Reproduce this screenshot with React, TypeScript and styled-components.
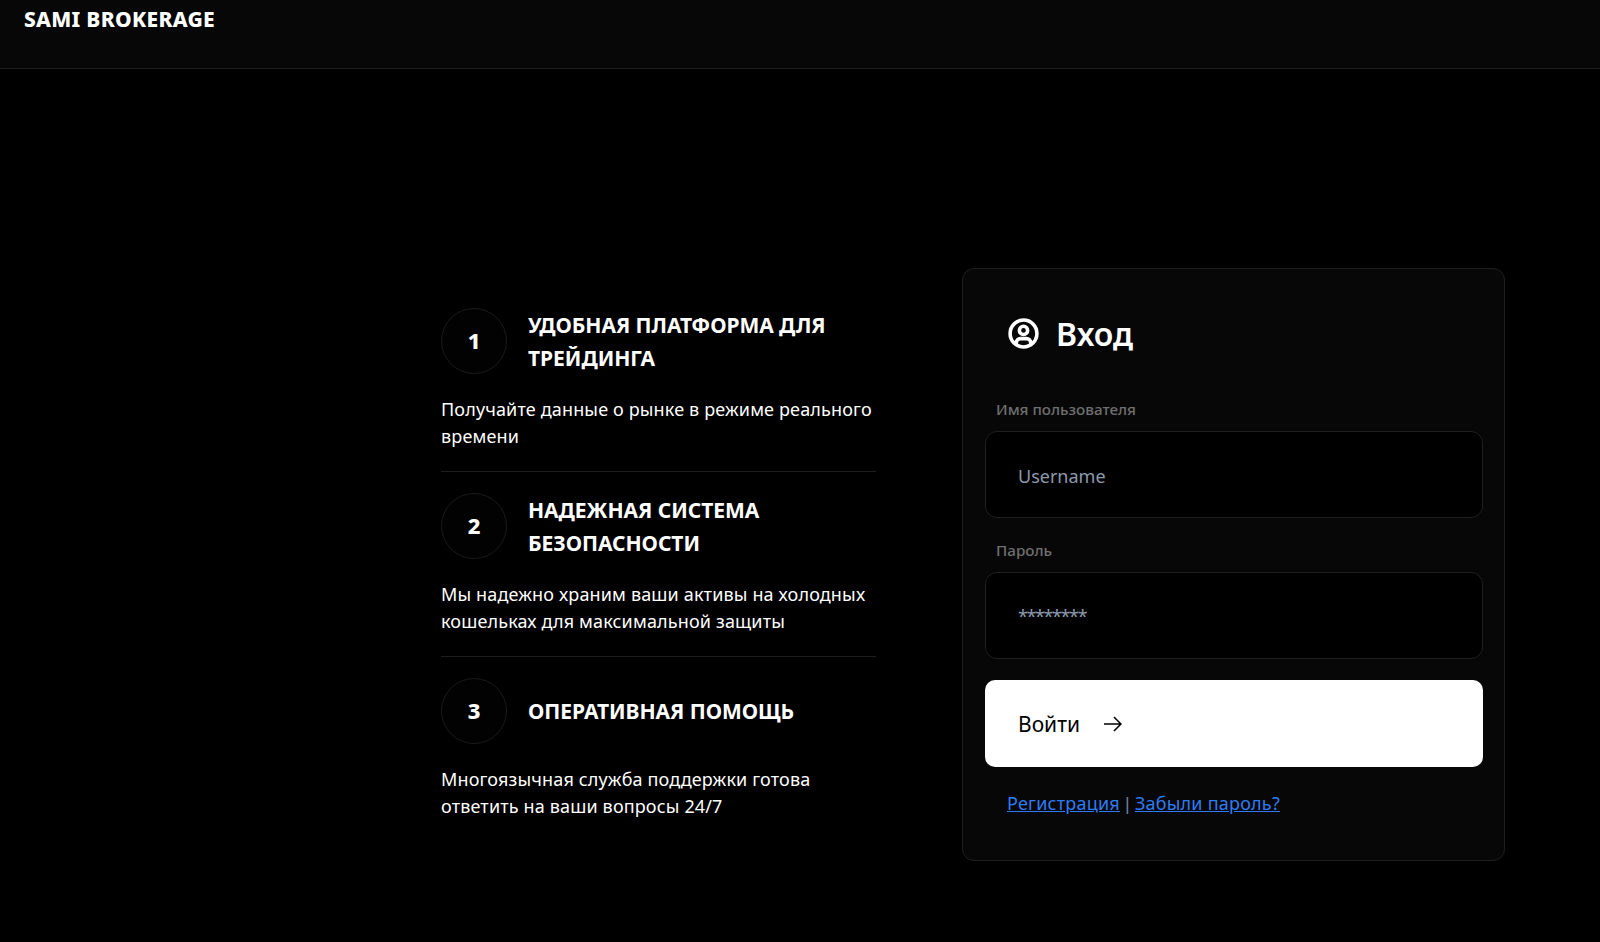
import React from "react";
import styled, { createGlobalStyle } from "styled-components";

const Global = createGlobalStyle`
  html, body { margin: 0; padding: 0; background: #000; }
  body { font-family: "Noto Sans", "Roboto", "Liberation Sans", sans-serif; color: #fff; }
  * { box-sizing: border-box; }
`;
const Page = styled.div`
  width: 100%;
  min-height: 942px;
  background: #000;
  overflow: hidden;
`;
const Header = styled.header`
  height: 69px;
  background: #070707;
  border-bottom: 1px solid #1f1f1f;
  padding: 6px 0 0 24px;
`;
const Brand = styled.div`
  font-size: 21px;
  line-height: 26px;
  font-weight: 800;
  letter-spacing: 0.3px;
`;
const Main = styled.main`
  display: flex;
  align-items: flex-start;
  padding: 199px 0 0 441px;
  gap: 86px;
`;
const Features = styled.section`
  width: 435px;
  padding-top: 40px;
`;
const Feature = styled.article<{ $last?: boolean }>`
  padding-bottom: 21px;
  margin-bottom: 21px;
  border-bottom: ${(p) => (p.$last ? "none" : "1px solid #1f1f1f")};
`;
const FeatureHead = styled.div`
  display: flex;
  align-items: center;
  gap: 21px;
  height: 66px;
  margin-bottom: 22px;
`;
const Circle = styled.div`
  width: 66px;
  height: 66px;
  flex: none;
  border: 1px solid #1a1a1a;
  border-radius: 50%;
  background: #020202;
  display: flex;
  align-items: center;
  justify-content: center;
  padding-bottom: 3px;
  font-size: 22px;
  font-weight: 800;
`;
const FeatureTitle = styled.h3`
  margin: 0;
  padding-top: 1px;
  font-size: 21px;
  line-height: 32.5px;
  font-weight: 700;
  letter-spacing: -0.05px;
`;
const FeatureText = styled.p`
  margin: 0;
  font-size: 18px;
  line-height: 27px;
  font-weight: 400;
  letter-spacing: 0.15px;
`;
const Card = styled.section`
  width: 543px;
  height: 593px;
  background: #070707;
  border: 1px solid #1f1f1f;
  border-radius: 12px;
  padding: 0 21.5px 0 22px;
`;
const CardTitle = styled.div`
  display: flex;
  align-items: center;
  height: 66px;
  margin-top: 31px;
  margin-bottom: 33px;
  padding-left: 22px;
  gap: 16px;
  font-size: 32px;
  font-weight: 600;
`;
const Label = styled.label`
  display: block;
  margin-left: 11px;
  font-size: 15.2px;
  line-height: 20px;
  font-weight: 500;
  color: #6f6f6f;
  margin-bottom: 12px;
`;
const InputBox = styled.div<{ $gap: number; $mask?: boolean }>`
  height: 87px;
  background: #000;
  border: 1px solid #1f1f1f;
  border-radius: 12px;
  display: flex;
  align-items: center;
  padding: ${(p) => (p.$mask ? "1px" : "3px")} 0 0 32px;
  font-size: 18px;
  color: #8b9aad;
  letter-spacing: ${(p) => (p.$mask ? "-1.4px" : "0")};
  margin-bottom: ${(p) => p.$gap}px;
`;
const SubmitButton = styled.button`
  width: 100%;
  height: 87px;
  border: none;
  border-radius: 10px;
  background: #fff;
  color: #000;
  display: flex;
  align-items: center;
  gap: 21px;
  padding: 0 0 0 33px;
  font-family: inherit;
  font-size: 21px;
  font-weight: 400;
`;
const Links = styled.div`
  margin: 24px 0 0 22px;
  font-size: 18px;
  line-height: 24px;
  letter-spacing: 0.22px;
  color: #6f7f96;
`;
const Link = styled.a`
  color: #2f7bf5;
  text-decoration: underline;
`;
const Separator = styled.span`
  display: inline-block;
  width: 15px;
  text-align: center;
  letter-spacing: 0;
  font-family: "Liberation Sans", sans-serif;
`;

const features = [
  { n: 1, title: "УДОБНАЯ ПЛАТФОРМА ДЛЯ ТРЕЙДИНГА", text: "Получайте данные о рынке в режиме реального времени" },
  { n: 2, title: "НАДЕЖНАЯ СИСТЕМА БЕЗОПАСНОСТИ", text: "Мы надежно храним ваши активы на холодных кошельках для максимальной защиты" },
  { n: 3, title: "ОПЕРАТИВНАЯ ПОМОЩЬ", text: "Многоязычная служба поддержки готова ответить на ваши вопросы 24/7" },
];

const UserAvatar = () => (
  <svg width="33" height="33" viewBox="0 0 32 32" fill="currentColor" stroke="currentColor" strokeWidth="1.5" aria-hidden>
    <path d="M16,8a5,5,0,1,0,5,5A5,5,0,0,0,16,8Zm0,8a3,3,0,1,1,3-3A3.0034,3.0034,0,0,1,16,16Z" />
    <path d="M16,2A14,14,0,1,0,30,16,14.0158,14.0158,0,0,0,16,2ZM10,26.3765V25a3.0033,3.0033,0,0,1,3-3h6a3.0033,3.0033,0,0,1,3,3v1.3765a11.8989,11.8989,0,0,1-12,0Zm13.9925-1.4507A5.0016,5.0016,0,0,0,19,20H13a5.0016,5.0016,0,0,0-4.9925,4.9258,12,12,0,1,1,15.985,0Z" />
  </svg>
);
const ArrowRight = () => (
  <svg width="24" height="24" viewBox="0 0 32 32" fill="currentColor" aria-hidden>
    <path d="M18 6L16.57 7.393 24.15 15 4 15 4 17 24.15 17 16.57 24.573 18 26 28 16 18 6z" />
  </svg>
);

export default function App() {
  return (
    <Page>
      <Global />
      <Header>
        <Brand>SAMI BROKERAGE</Brand>
      </Header>
      <Main>
        <Features>
          {features.map((f, i) => (
            <Feature key={f.n} $last={i === features.length - 1}>
              <FeatureHead>
                <Circle>{f.n}</Circle>
                <FeatureTitle>{f.title}</FeatureTitle>
              </FeatureHead>
              <FeatureText>{f.text}</FeatureText>
            </Feature>
          ))}
        </Features>
        <Card>
          <CardTitle>
            <UserAvatar />
            Вход
          </CardTitle>
          <Label>Имя пользователя</Label>
          <InputBox $gap={22}>Username</InputBox>
          <Label>Пароль</Label>
          <InputBox $gap={21} $mask>********</InputBox>
          <SubmitButton>
            Войти
            <ArrowRight />
          </SubmitButton>
          <Links>
            <Link href="#">Регистрация</Link>
            <Separator>|</Separator>
            <Link href="#">Забыли пароль?</Link>
          </Links>
        </Card>
      </Main>
    </Page>
  );
}
